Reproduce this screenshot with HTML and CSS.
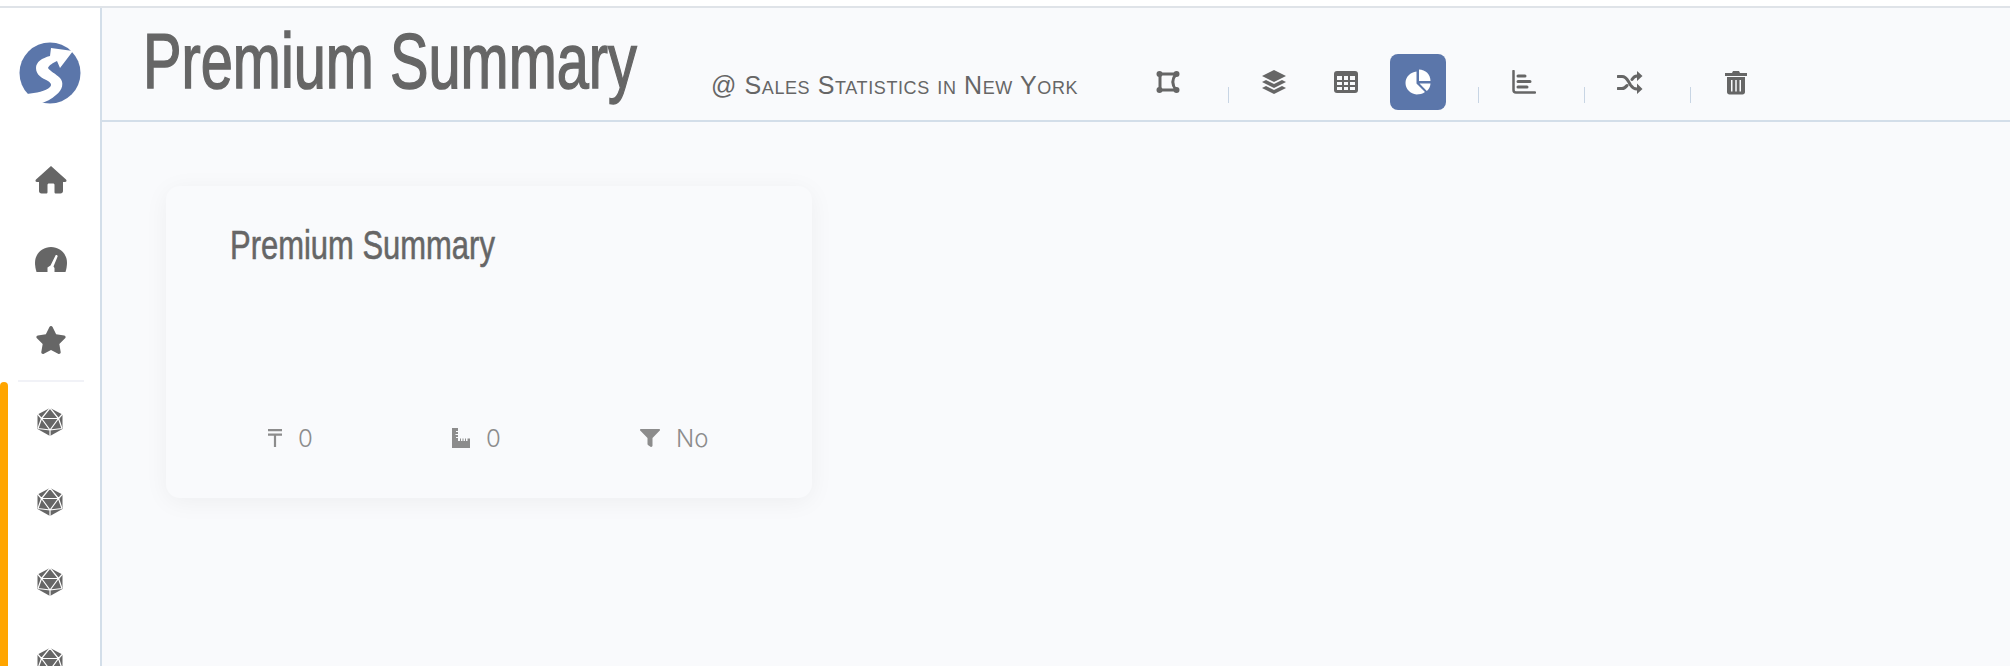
FILE: index.html
```html
<!DOCTYPE html>
<html lang="en">
<head>
	<meta charset="UTF-8">
	<title>Premium Summary</title>
	<link rel="stylesheet" href="styles.css">
</head>
<body>
	<svg class="defs" width="0" height="0">
		<symbol id="d20" viewBox="0 0 26 28">
			<path d="M13 0L25.500 6.500V21L13 28L0.500 21V6.500Z" fill="#666"/>
			<path d="M13 0L4.500 10.500H21.500L13 0M4.500 10.500L13 22L21.500 10.500M4.500 10.500L1 20.500M21.500 10.500L25 20.500M1 20.500L13 22L25 20.500M13 22V28M0 5.500L4.500 10.500M26 5.500L21.500 10.500" fill="none" stroke="#fff" stroke-width="1.200"/>
		</symbol>
	</svg>
	<div class="topline"></div>
	<div class="app">
		<aside class="sidebar">
			<div class="logo">
				<svg width="62" height="62" viewBox="19 42 62 62">
					<circle cx="50" cy="73" r="30.500" fill="#5b76aa"/>
					<path d="M27 94C36 93 46 91 50 87C52 85 51 83 48 81C42 78 36 75 36 68C36 62 42 58 50 56L51 48L73 51L60 68L57 61C53 63 49 65 48 68C50 71 56 74 60 78C64 82 63 90 56 95C52 99 46 102 39 104Z" fill="#fff"/>
				</svg>
			</div>
			<nav class="nav">
				<a class="nav-item">
					<svg width="32" height="28" viewBox="0 0 32 28"><path d="M16 0L31 13.500C32 14.500 31.500 16 30 16H28V25C28 26.500 27 27.500 25.500 27.500H21C20 27.500 19.500 27 19.500 26V19C19.500 18 19 17.500 18 17.500H14C13 17.500 12.500 18 12.500 19V26C12.500 27 12 27.500 11 27.500H6.500C5 27.500 4 26.500 4 25V16H2C0.500 16 0 14.500 1 13.500Z" fill="#666"/></svg>
				</a>
				<a class="nav-item">
					<svg width="32" height="26" viewBox="0 0 32 26"><path d="M16 0C7.200 0 0 7 0 15.500C0 19 .6 22 1.500 25H30.500C31.400 22 32 19 32 15.500C32 7 24.800 0 16 0Z" fill="#666"/><path d="M12.500 25L12.500 20.500L15.500 18.500L20.500 8.500C21 7.600 23 8.400 22.600 9.500L18.500 19.500L19.500 21V25Z" fill="#fff"/></svg>
				</a>
				<a class="nav-item">
					<svg width="32" height="28" viewBox="0 0 576 512"><path d="M259.300 17.800L194 150.200 47.900 171.500c-26.200 3.800-36.700 36.100-17.700 54.600l105.700 103-25 145.500c-4.500 26.300 23.200 46 46.400 33.700L288 439.600l130.700 68.700c23.200 12.200 50.900-7.400 46.400-33.700l-25-145.500 105.700-103c19-18.500 8.500-50.800-17.700-54.600L382 150.200 316.700 17.800c-11.700-23.600-45.600-23.900-57.400 0z" fill="#666"/></svg>
				</a>
			</nav>
			<div class="models">
				<div class="models-bar"></div>
				<div class="models-list">
					<a class="model"><svg width="26" height="28"><use href="#d20"/></svg></a>
					<a class="model"><svg width="26" height="28"><use href="#d20"/></svg></a>
					<a class="model"><svg width="26" height="28"><use href="#d20"/></svg></a>
					<a class="model"><svg width="26" height="28"><use href="#d20"/></svg></a>
				</div>
			</div>
		</aside>
		<main class="main">
			<header class="header">
				<div class="title-box"><h1 class="title">Premium Summary</h1></div>
				<span class="subtitle">@ Sales Statistics in New York</span>
				<div class="tools">
					<a class="tool">
						<svg width="24" height="24" viewBox="0 0 24 24"><path d="M4 4H20C16 9 16 15 20 20H4Z" fill="none" stroke="#666" stroke-width="3"/><circle cx="3.500" cy="4" r="3" fill="#666"/><circle cx="20.500" cy="4" r="3" fill="#666"/><circle cx="3.500" cy="20" r="3" fill="#666"/><circle cx="20.500" cy="20" r="3" fill="#666"/></svg>
					</a>
					<i class="sep"></i>
					<a class="tool">
						<svg width="26" height="26" viewBox="0 0 26 26"><path d="M13 1L25 7L13 13L1 7Z" fill="#666"/><path d="M5 11L1 13L13 19L25 13L21 11L13 15Z" fill="#666"/><path d="M5 17L1 19L13 25L25 19L21 17L13 21Z" fill="#666"/></svg>
					</a>
					<a class="tool">
						<svg width="24" height="22" viewBox="0 0 24 22"><rect width="24" height="22" rx="3" fill="#666"/><path d="M3 5H8V9H3ZM10 5H14V9H10ZM16 5H21V9H16ZM3 11H8V14H3ZM10 11H14V14H10ZM16 11H21V14H16ZM3 16H8V19H3ZM10 16H14V19H10ZM16 16H21V19H16Z" fill="#f9fafc"/></svg>
					</a>
					<a class="tool active">
						<svg width="26" height="26" viewBox="0 0 26 26"><path d="M11.500 2.500V14.500L20 23C17.500 24.800 14.500 25.500 11.500 25.500C5.500 25 0.500 20 0.500 14C0.500 8 5.500 3 11.500 2.500Z" fill="#fff"/><path d="M14 0.500C20.500 0.500 25.500 5.500 25.500 12H14Z" fill="#fff"/><path d="M14.500 14.500H25.500C25.300 17.500 24 20 21.800 22Z" fill="#fff"/></svg>
					</a>
					<i class="sep"></i>
					<a class="tool">
						<svg width="24" height="24" viewBox="0 0 24 24"><path d="M1.500 1V20C1.500 21.500 2.500 22.500 4 22.500H23" fill="none" stroke="#666" stroke-width="2.500" stroke-linecap="round"/><path d="M6 6H13M6 11.500H18M6 17H15" fill="none" stroke="#666" stroke-width="3" stroke-linecap="round"/></svg>
					</a>
					<i class="sep"></i>
					<a class="tool">
						<svg width="26" height="24" viewBox="0 0 26 24"><path d="M1 6.500H5C8 6.500 9.500 8 11.500 11.500L13.500 15C15.500 18 17 19 20 19H21M1 18.500H5C7 18.500 8.500 17.500 10 15.500M15 9.500C16.500 7 18 6 20 6H21" fill="none" stroke="#666" stroke-width="3" stroke-linecap="round"/><path d="M20 1L25.500 6L20 11ZM20 13.500L25.500 19L20 24Z" fill="#666"/></svg>
					</a>
					<i class="sep"></i>
					<a class="tool">
						<svg width="22" height="25" viewBox="0 0 22 25"><path d="M0 3H7L8 1H14L15 3H22V6H0Z" fill="#666"/><path d="M2 7H20V22C20 23.500 19 24.500 17.500 24.500H4.500C3 24.500 2 23.500 2 22ZM6 10V21.500H7.500V10ZM10.250 10V21.500H11.750V10ZM14.500 10V21.500H16V10Z" fill="#666" fill-rule="evenodd"/></svg>
					</a>
				</div>
			</header>
			<section class="content">
				<article class="card">
					<h2 class="card-title">Premium Summary</h2>
					<div class="card-stats">
						<div class="stat">
							<svg width="14" height="18" viewBox="0 0 14 18"><path d="M0 0H14V2.200H0ZM0 4.500H14V6.700H8.100V18H5.900V6.700H0Z" fill="#8c8c8c"/></svg>
							<span>0</span>
						</div>
						<div class="stat">
							<svg width="18" height="20" viewBox="0 0 18 20"><path d="M0 0H6V3H4V4H6V6H3.500V7H6V9H4V10H6V13H8V10.500H9V13H10.500V10.500H11.500V13H13V10.500H14V13H15.500V10.500H18V20H0Z" fill="#8c8c8c"/></svg>
							<span>0</span>
						</div>
						<div class="stat">
							<svg width="20" height="18" viewBox="0 0 20 18"><path d="M0.800 0H19.200C20 0 20.300 1 19.800 1.500L12.500 9V16.500C12.500 17.500 11.500 18.300 10.500 17.700L8.300 16.200C7.800 15.900 7.500 15.500 7.500 15V9L0.200 1.500C-0.300 1 0 0 0.800 0Z" fill="#8c8c8c"/></svg>
							<span>No</span>
						</div>
					</div>
				</article>
			</section>
		</main>
	</div>
</body>
</html>
```

FILE: styles.css
```css
html, body {
	height: 100%;
	margin: 0;
	padding: 0;
	overflow: hidden;
	background: #fff;
}
.defs {
	display: block;
	height: 0;
}
.topline {
	height: 6px;
	border-bottom: 2px solid #dfe3e8;
}
.app {
	display: flex;
	height: 658px;
	overflow: hidden;
}
.sidebar {
	width: 100px;
	flex: none;
	border-right: 2px solid #d3dee9;
	background: #fff;
}
.logo {
	display: flex;
	justify-content: center;
	padding-top: 34px;
	height: 96px;
}
.logo svg {
	display: block;
}
.nav {
	display: flex;
	flex-direction: column;
	height: 242px;
	margin: 0 16px 0 18px;
	border-bottom: 2px solid #f1f2f7;
}
.nav-item {
	display: flex;
	justify-content: center;
	margin-bottom: 53px;
}
.nav-item:first-child {
	padding-top: 28px;
}
.nav-item svg {
	display: block;
}
.models {
	display: flex;
	height: 284px;
	overflow: hidden;
}
.models-bar {
	width: 8px;
	border-radius: 4px 4px 0 0;
	background: #ffa500;
}
.models-list {
	flex: 1;
	display: flex;
	flex-direction: column;
	align-items: center;
	gap: 52px;
	padding: 26px 8px 0 0;
}
.model {
	display: block;
	height: 28px;
	flex: none;
}
.main {
	flex: 1;
	background: #f9fafc;
}
.header {
	height: 112px;
	border-bottom: 2px solid #d3dee9;
	display: flex;
	padding-left: 41px;
	color: #666;
}
.title-box {
	width: 568px;
	flex: none;
}
.title {
	display: inline-block;
	margin: 0;
	font-family: "Liberation Sans", sans-serif;
	font-weight: 400;
	font-size: 78px;
	line-height: 106px;
	white-space: nowrap;
	-webkit-text-stroke: 1.5px #666;
	transform: scaleX(.74);
	transform-origin: left center;
}
.subtitle {
	font-family: "Liberation Sans", sans-serif;
	font-variant: small-caps;
	font-size: 25px;
	line-height: 28px;
	letter-spacing: 0.6px;
	margin-top: 63px;
	white-space: nowrap;
	width: 429px;
	flex: none;
}
.tools {
	display: flex;
	align-items: center;
	height: 56px;
	margin-top: 46px;
}
.tool {
	display: flex;
	align-items: center;
	justify-content: center;
	width: 56px;
	height: 56px;
	border-radius: 8px;
	margin-right: 16px;
}
.tool.active {
	background: #5b76aa;
}
.sep {
	display: block;
	width: 1px;
	height: 16px;
	background: #c8d5e4;
	margin: 26px 17px 0 16px;
}
.content {
	padding: 64px 0 0 64px;
}
.card {
	width: 646px;
	height: 312px;
	box-sizing: border-box;
	border-radius: 14px;
	background: #f9fafc;
	box-shadow: 0 4px 24px rgba(0, 0, 0, .05);
	padding: 33px 0 0 64px;
}
.card-title {
	margin: 0;
	font-family: "Liberation Sans", sans-serif;
	font-weight: 400;
	font-size: 41px;
	line-height: 52px;
	color: #666;
	white-space: nowrap;
	-webkit-text-stroke: .6px #666;
	transform: scaleX(.755);
	transform-origin: left center;
}
.card-stats {
	display: grid;
	grid-template-columns: 184px 188px 100px;
	margin: 153px 0 0 38px;
	font-family: Inter, "Liberation Sans", sans-serif;
	font-weight: 300;
	font-size: 24px;
	color: #8c8c8c;
}
.stat {
	display: flex;
	align-items: center;
	gap: 16px;
	height: 28px;
}
```
